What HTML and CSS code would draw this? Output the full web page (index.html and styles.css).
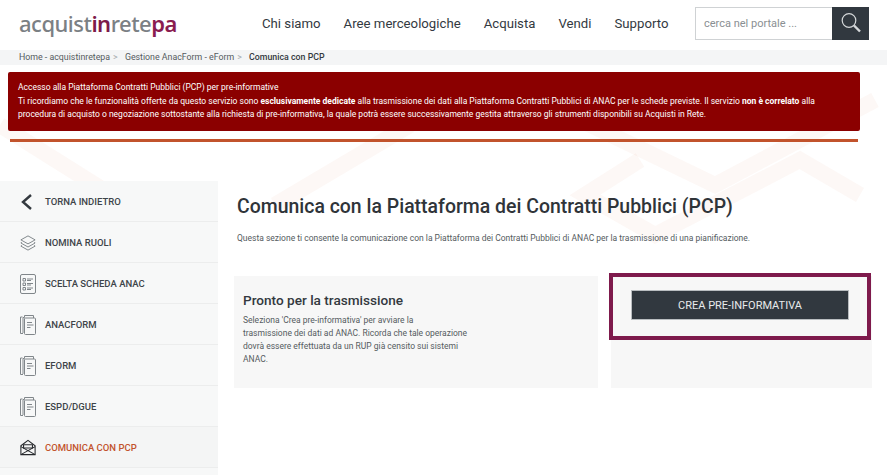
FILE: index.html
```html
<!DOCTYPE html>
<html lang="en">
<head>
    <meta charset="UTF-8">
    <meta name="viewport" content="width=device-width, initial-scale=1.0">
    <title>Comunica con PCP</title>
    <link rel="stylesheet" href="styles.css">
</head>
<body>
    <svg class="watermark" width="887" height="475" viewBox="0 0 887 475" fill="none" stroke="#c8501e" stroke-opacity="0.04" stroke-width="16">
        <path d="M0 125 L175 235"/>
        <path d="M410 125 L275 205"/>
        <path d="M570 115 L715 185 L875 100"/>
        <path d="M860 195 L800 160 L655 235 L585 195 L640 160"/>
    </svg>
    <header class="topbar">
        <div class="logo">acquist<span class="logo-in">in</span>rete<span class="logo-pa">pa</span></div>
        <nav class="mainnav">
            <a>Chi siamo</a>
            <a>Aree merceologiche</a>
            <a>Acquista</a>
            <a>Vendi</a>
            <a>Supporto</a>
        </nav>
        <div class="search">
            <div class="search-input">cerca nel portale ...</div>
            <div class="search-btn">
                <svg width="24" height="24" viewBox="0 0 24 24" fill="none" stroke="#d5d8da" stroke-width="1.2">
                    <circle cx="10" cy="9.5" r="6.8"/>
                    <path d="M15 14.5 L21 20.5" stroke-width="2.4"/>
                </svg>
            </div>
        </div>
    </header>
    <div class="crumbs">
        <span>Home - acquistinretepa</span><i>&gt;</i>
        <span>Gestione AnacForm - eForm</span><i>&gt;</i>
        <b>Comunica con PCP</b>
    </div>
    <div class="alert">
        Accesso alla Piattaforma Contratti Pubblici (PCP) per pre-informative<br>
        Ti ricordiamo che le funzionalità offerte da questo servizio sono <b>esclusivamente dedicate</b> alla trasmissione dei dati alla Piattaforma Contratti Pubblici di ANAC per le schede previste. Il servizio <b>non è correlato</b> alla<br>
        procedura di acquisto o negoziazione sottostante alla richiesta di pre-informativa, la quale potrà essere successivamente gestita attraverso gli strumenti disponibili su Acquisti in Rete.
    </div>
    <div class="rule"></div>
    <div class="page">
        <aside class="sidebar">
            <a class="side-item">
                <svg class="ico" width="16" height="18" viewBox="0 0 16 18" fill="none" stroke="#33393f" stroke-width="2.4"><path d="M11 2 L3 9 L11 16"/></svg>
                TORNA INDIETRO
            </a>
            <a class="side-item">
                <svg class="ico" width="16" height="16" viewBox="0 0 18 18" fill="none" stroke="#80868a" stroke-width="1.1"><path d="M9 1 L17 5.500 L9 10 L1 5.500 Z"/><path d="M2 8 L1 9 L9 13.500 L17 9 L16 8"/><path d="M2 11.500 L1 12.500 L9 17 L17 12.500 L16 11.500"/></svg>
                NOMINA RUOLI
            </a>
            <a class="side-item">
                <svg class="ico" width="16" height="20" viewBox="0 0 16 20" fill="none" stroke="#80868a" stroke-width="1"><rect x="0.500" y="0.500" width="15" height="19" rx="1.500"/><path d="M3 4.500h2.500v2.500h-2.500zM3 9h2.500v2.500h-2.500zM3 13.500h2.500v2.500h-2.500zM7 5h6M7 6.500h4M7 9.500h6M7 11h4M7 14h6M7 15.500h4"/></svg>
                SCELTA SCHEDA ANAC
            </a>
            <a class="side-item">
                <svg class="ico" width="16" height="20" viewBox="0 0 16 20" fill="none" stroke="#80868a" stroke-width="1"><path d="M3 18.500h-2.500V2h2M3 18V2.500h1.500V.5h9V3"/><rect x="4.500" y="3" width="11" height="16.500" rx="1"/><path d="M7 7.500h5M7 10h6.500M7 12.500h3.500"/></svg>
                ANACFORM
            </a>
            <a class="side-item">
                <svg class="ico" width="16" height="20" viewBox="0 0 16 20" fill="none" stroke="#80868a" stroke-width="1"><path d="M3 18.500h-2.500V2h2M3 18V2.500h1.500V.5h9V3"/><rect x="4.500" y="3" width="11" height="16.500" rx="1"/><path d="M7 7.500h5M7 10h6.500M7 12.500h3.500"/></svg>
                EFORM
            </a>
            <a class="side-item">
                <svg class="ico" width="16" height="20" viewBox="0 0 16 20" fill="none" stroke="#80868a" stroke-width="1"><path d="M3 18.500h-2.500V2h2M3 18V2.500h1.500V.5h9V3"/><rect x="4.500" y="3" width="11" height="16.500" rx="1"/><path d="M7 7.500h5M7 10h6.500M7 12.500h3.500"/></svg>
                ESPD/DGUE
            </a>
            <a class="side-item side-active">
                <svg class="ico" width="16" height="17" viewBox="0 0 18 18" fill="none" stroke="#26292c" stroke-width="1.200"><path d="M1 7 L9 1 L17 7 V17 H1 Z"/><path d="M1 8 L17 17 M17 8 L1 17"/><path d="M4 6h10v3.500H4z"/></svg>
                COMUNICA CON PCP
            </a>
        </aside>
        <main class="content">
            <h1>Comunica con la Piattaforma dei Contratti Pubblici (PCP)</h1>
            <p class="intro">Questa sezione ti consente la comunicazione con la Piattaforma dei Contratti Pubblici di ANAC per la trasmissione di una pianificazione.</p>
            <div class="cards">
                <section class="card">
                    <h2>Pronto per la trasmissione</h2>
                    <p>Seleziona 'Crea pre-informativa' per avviare la<br>trasmissione dei dati ad ANAC. Ricorda che tale operazione<br>dovrà essere effettuata da un RUP già censito sui sistemi<br>ANAC.</p>
                </section>
                <section class="card-action">
                    <div class="action-frame">
                        <button class="btn-crea">CREA PRE-INFORMATIVA</button>
                    </div>
                </section>
            </div>
        </main>
    </div>
</body>
</html>
```

FILE: styles.css
```css
body {
    font-family: Roboto, "Noto Sans", sans-serif;
    background-color: white;
    margin: 0;
    height: 475px;
    overflow: hidden;
    color: #33393f;
}
.watermark {
    position: absolute;
    left: 0;
    top: 0;
    z-index: -1;
}
.topbar {
    display: flex;
    align-items: center;
    height: 50px;
    padding: 0 18px 4px 19px;
    box-sizing: border-box;
}
.logo {
    font-family: "Noto Sans", sans-serif;
    font-size: 22px;
    font-weight: 500;
    color: #7b8084;
    width: 243px;
    flex-shrink: 0;
    letter-spacing: -0.5px;
}
.logo-in {
    color: #7d1a4a;
    font-weight: 600;
}
.logo-pa {
    color: #8a1c50;
    font-weight: 600;
}
.mainnav {
    display: flex;
    gap: 23px;
    font-size: 13.200px;
    color: #33393f;
    flex: 1;
    white-space: nowrap;
}
.search {
    display: flex;
    height: 33px;
    flex-shrink: 0;
}
.search-input {
    width: 128px;
    border: 1px solid #cfd2d4;
    border-right: 0;
    padding-left: 8px;
    font-size: 11px;
    line-height: 31px;
    color: #8a8f93;
    background: white;
}
.search-btn {
    width: 37px;
    background-color: #31383f;
    display: flex;
    align-items: center;
    justify-content: center;
}
.crumbs {
    height: 15px;
    background-color: #f4f5f6;
    padding-left: 19px;
    font-size: 8.800px;
    line-height: 15px;
    color: #555b60;
}
.crumbs i {
    font-style: normal;
    color: #a8acaf;
    margin: 0 5px 0 3px;
}
.crumbs b {
    font-weight: 500;
    color: #33393f;
}
.alert {
    margin: 7px 27px 0 8px;
    height: 59px;
    box-sizing: border-box;
    padding: 9px 10px;
    background-color: #8b0000;
    border-radius: 2px;
    color: white;
    font-size: 8.500px;
    line-height: 13.500px;
    white-space: nowrap;
}
.rule {
    margin: 8px 29px 0 10px;
    height: 3px;
    background-color: #c2532c;
}
.page {
    display: flex;
    margin-top: 39px;
}
.sidebar {
    width: 218px;
    flex-shrink: 0;
    background-color: #f7f8f8;
    height: 294px;
}
.side-item {
    display: flex;
    align-items: center;
    height: 41px;
    box-sizing: border-box;
    border-bottom: 1px solid #eceded;
    font-size: 9.500px;
    font-weight: 500;
    color: #3d4449;
    padding: 1px 0 0 20px;
    gap: 9px;
}
.ico {
    flex-shrink: 0;
}
.side-active {
    background-color: #f4f5f5;
    color: #c2532c;
}
.content {
    flex: 1;
    padding: 14px 15px 0 16px;
}
h1 {
    font-size: 19.450px;
    font-weight: 500;
    margin: 0 0 0 3px;
    line-height: 24px;
    color: #2f3439;
    white-space: nowrap;
}
.intro {
    margin: 12px 0 0 3px;
    font-size: 8.500px;
    line-height: 14px;
    color: #555b60;
    white-space: nowrap;
}
.cards {
    display: flex;
    gap: 13px;
    margin-top: 31px;
}
.card {
    width: 364px;
    height: 112px;
    box-sizing: border-box;
    background-color: #f7f7f7;
    padding: 15px 9px;
}
.card h2 {
    font-size: 13.600px;
    font-weight: 500;
    line-height: 18px;
    margin: 0 0 5px;
    color: #33393f;
}
.card p {
    margin: 0;
    font-size: 8.500px;
    line-height: 13px;
    color: #555b60;
    white-space: nowrap;
}
.card-action {
    width: 261px;
    height: 112px;
    background-color: #f7f7f7;
}
.action-frame {
    width: 262px;
    height: 67px;
    margin: -3px 0 0 -2px;
    box-sizing: border-box;
    border: 4px solid #7e1a4c;
    padding: 13px 18px;
}
.btn-crea {
    display: block;
    width: 218px;
    height: 30px;
    background-color: #31383f;
    border: 1px solid #b9bdc0;
    color: #e8eaeb;
    font-family: inherit;
    font-size: 11px;
    padding: 0;
}
```
